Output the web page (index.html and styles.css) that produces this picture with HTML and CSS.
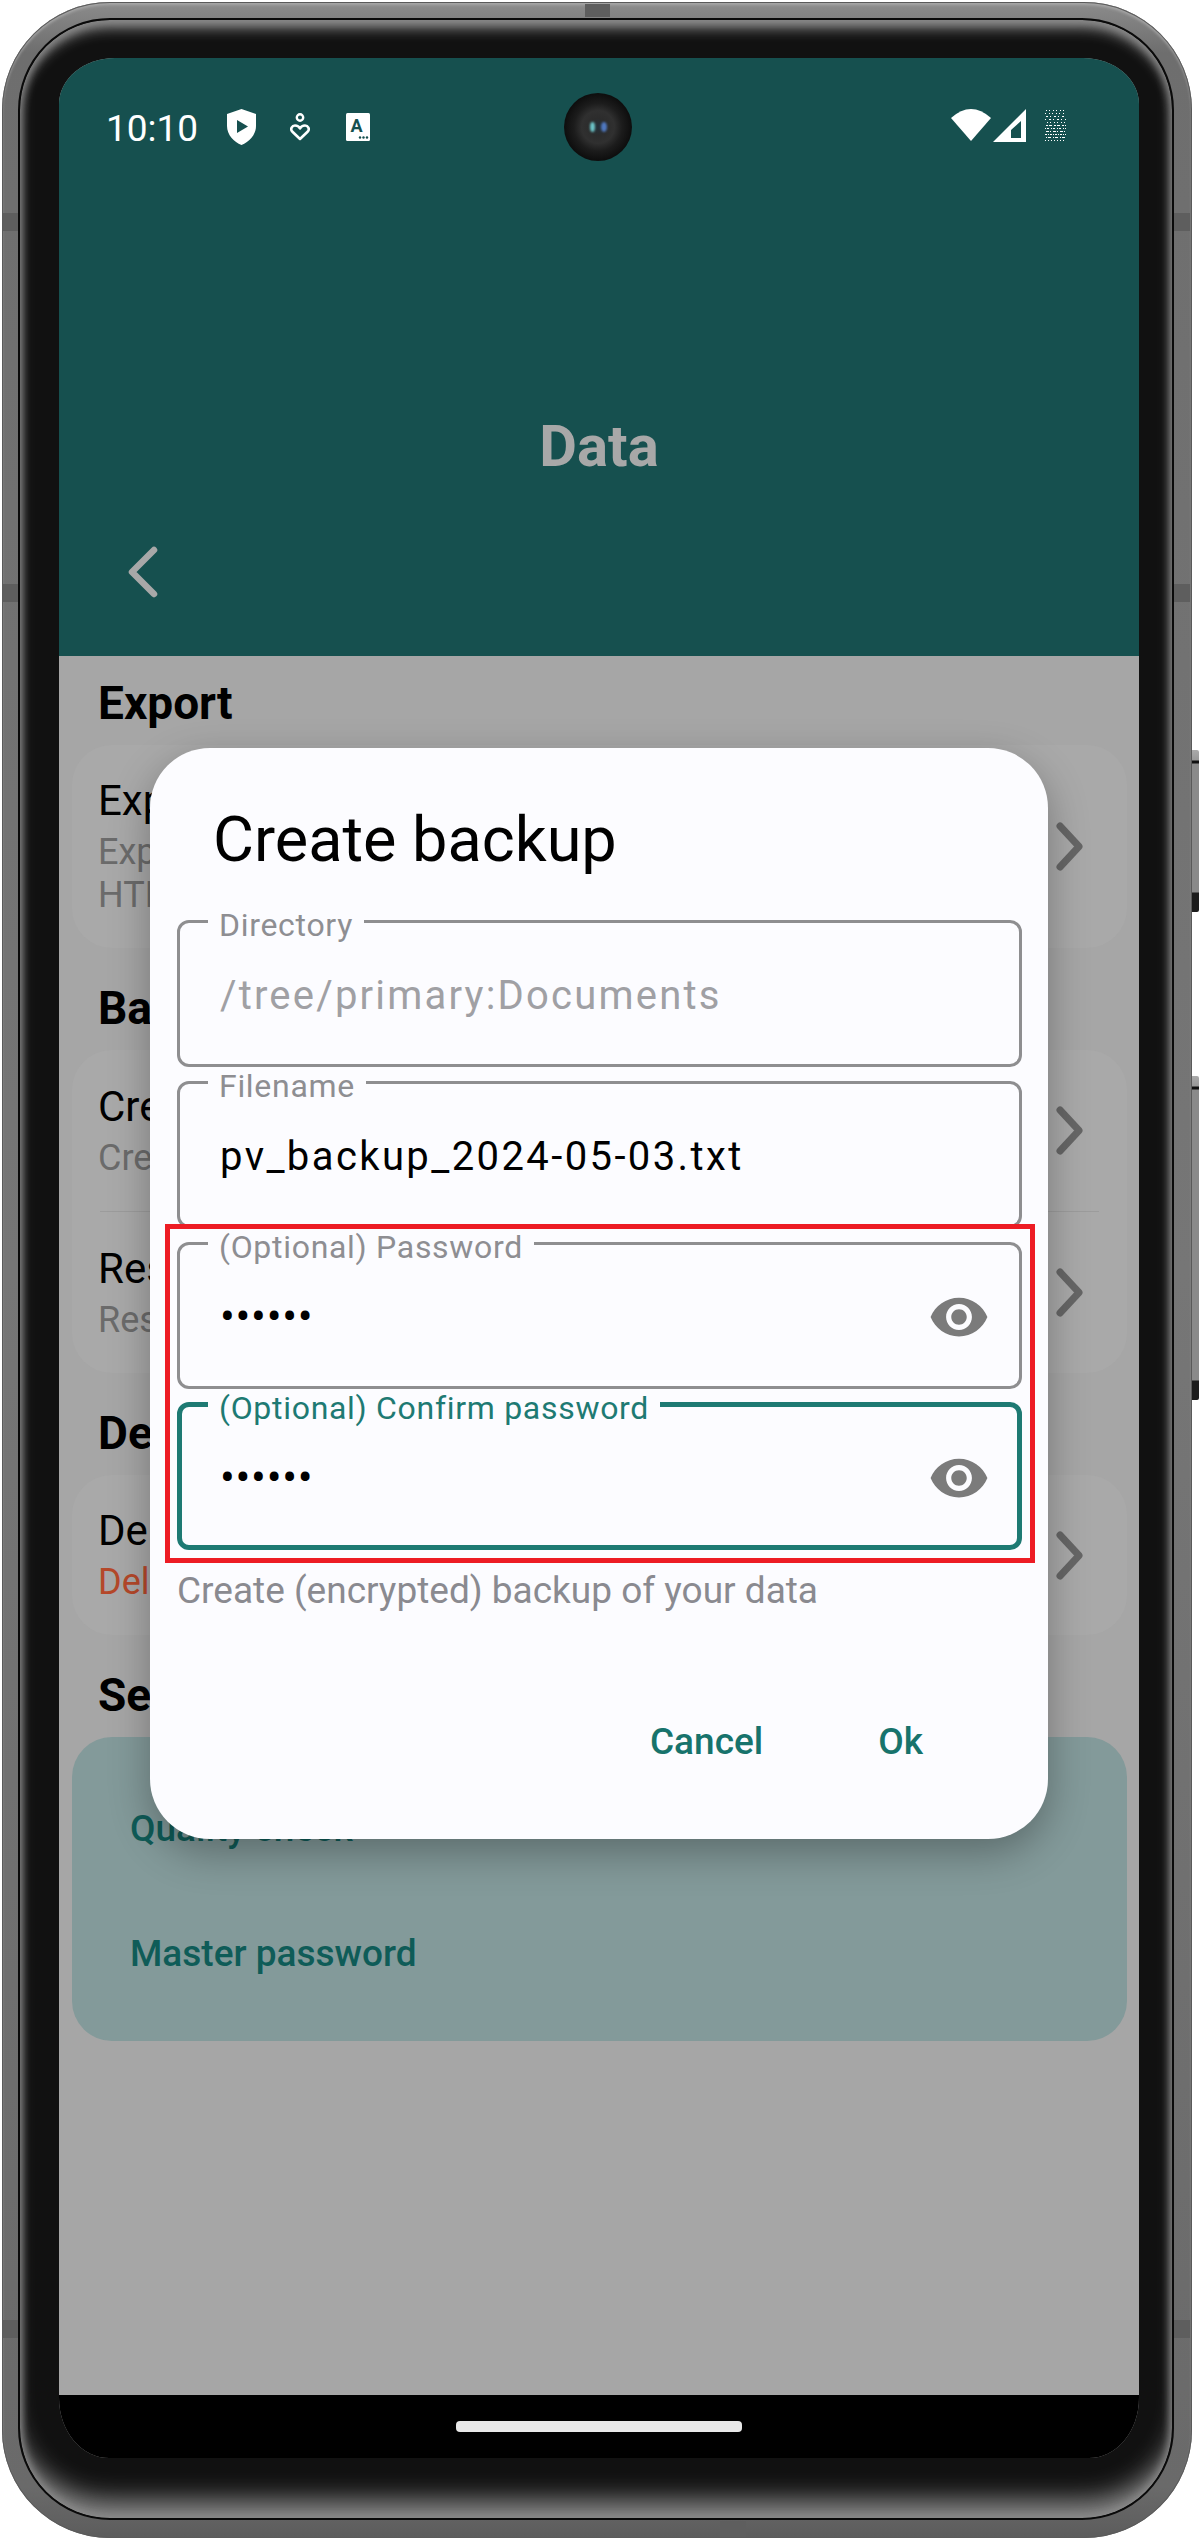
FILE: index.html
```html
<!DOCTYPE html>
<html lang="en">
<head>
  <meta charset="UTF-8">
  <title>Create backup</title>
  <link rel="stylesheet" href="styles.css">
</head>
<body>
  <div class="phone">
    <span class="side-btn side-btn-top"></span>
    <span class="side-btn side-btn-bottom"></span>
    <span class="band band-top"></span>
    <span class="band band-bottom"></span>
    <span class="band band-left band-a"></span>
    <span class="band band-left band-b"></span>
    <span class="band band-left band-c"></span>
    <span class="band band-right band-a"></span>
    <span class="band band-right band-b"></span>
    <span class="band band-right band-c"></span>

    <div class="bezel">
      <div class="screen">
        <div class="camera"><span class="lens lens-a"></span><span class="lens lens-b"></span></div>

        <header class="appbar">
          <div class="statusbar">
            <span class="time">10:10</span>
            <svg class="ic-shield" width="29" height="36" viewBox="0 0 29 36"><path fill="#fff" fill-rule="evenodd" d="M14.5 0 L29 5 V17 C29 26 22 33 14.5 36 C7 33 0 26 0 17 V5 Z M10 11 V24 L21 17.5 Z"/></svg>
            <svg class="ic-heart" width="20" height="28" viewBox="0 0 20 28"><circle cx="10" cy="4.5" r="3.2" fill="none" stroke="#fff" stroke-width="2.4"/><path fill="none" stroke="#fff" stroke-width="2.6" stroke-linejoin="round" d="M10 26 L2.2 18.5 C0 16 2 12.5 5 12.5 C7 12.5 9 13.5 10 15.5 C11 13.5 13 12.5 15 12.5 C18 12.5 20 16 17.8 18.5 Z"/></svg>
            <svg class="ic-lang" width="24" height="28" viewBox="0 0 24 28"><rect width="24" height="28" rx="1.5" fill="#fff"/><text x="10.5" y="19" text-anchor="middle" class="ic-lang-text">A</text><circle cx="14" cy="24.5" r="1.2" fill="#16504f"/><circle cx="17.5" cy="24.5" r="1.2" fill="#16504f"/><circle cx="21" cy="24.5" r="1.2" fill="#16504f"/></svg>
            <span class="status-gap"></span>
            <svg class="ic-wifi" width="40" height="32" viewBox="0 0 40 32"><path fill="#fff" d="M20 32 L0 9 Q20 -9 40 9 Z"/></svg>
            <svg class="ic-signal" width="33" height="33" viewBox="0 0 33 33"><path fill="#fff" fill-rule="evenodd" d="M33 0 V33 H0 Z M28 12 L18 21 V29 H28 Z"/></svg>
            <svg class="ic-noise" width="21" height="34" viewBox="0 0 21 34">
              <g stroke="#fff" stroke-width="1" fill="none">
                <path stroke-dasharray="1 2 1 3" d="M1 1.5H21"/>
                <path stroke-dasharray="1 3 1 2" d="M0 4.5H21"/>
                <path stroke-dasharray="2 2 1 3" d="M1 7.5H21"/>
                <path stroke-dasharray="1 3 2 2" d="M0 10.5H21"/>
                <path stroke-dasharray="1 2 1 3" d="M2 13.5H21"/>
                <path stroke-dasharray="2 1 3 2" d="M1 16.5H21"/>
                <path stroke-dasharray="1 1 2 2" d="M0 19.5H21"/>
                <path stroke-dasharray="3 1 1 2" d="M1 22.5H21"/>
                <path stroke-dasharray="2 1 1 1" d="M0 25.5H21"/>
                <path stroke-dasharray="1 1 3 2" d="M1 28.5H21"/>
                <path stroke-dasharray="1 2" d="M0 31.5H21"/>
              </g>
            </svg>
          </div>
          <h1 class="title">Data</h1>
          <svg class="back" width="30" height="52" viewBox="0 0 30 52"><path d="M26 4 L4 26 L26 48" fill="none" stroke="#a8a8a8" stroke-width="6.5" stroke-linecap="round" stroke-linejoin="round"/></svg>
        </header>

        <main class="content">
          <h2 class="section-title">Export</h2>
          <div class="card card-export">
            <div class="row">
              <div class="row-text">
                <div class="row-title">Export data</div>
                <div class="row-sub">Export your passwords to a<br>HTML file</div>
              </div>
              <svg class="chevron" width="27" height="49" viewBox="0 0 27 49"><path d="M4 4 L23 24.5 L4 45"/></svg>
            </div>
          </div>

          <h2 class="section-title">Backup</h2>
          <div class="card card-backup">
            <div class="row row-half">
              <div class="row-text">
                <div class="row-title">Create backup</div>
                <div class="row-sub">Create backup of your data</div>
              </div>
              <svg class="chevron" width="27" height="49" viewBox="0 0 27 49"><path d="M4 4 L23 24.5 L4 45"/></svg>
            </div>
            <div class="divider"></div>
            <div class="row row-half">
              <div class="row-text">
                <div class="row-title">Restore backup</div>
                <div class="row-sub">Restore backup of your data</div>
              </div>
              <svg class="chevron" width="27" height="49" viewBox="0 0 27 49"><path d="M4 4 L23 24.5 L4 45"/></svg>
            </div>
          </div>

          <h2 class="section-title">Delete</h2>
          <div class="card card-delete">
            <div class="row">
              <div class="row-text">
                <div class="row-title">Delete data</div>
                <div class="row-sub row-sub-danger">Delete all your data</div>
              </div>
              <svg class="chevron" width="27" height="49" viewBox="0 0 27 49"><path d="M4 4 L23 24.5 L4 45"/></svg>
            </div>
          </div>

          <h2 class="section-title">Security</h2>
          <div class="card card-security">
            <div class="link-row">Quality check</div>
            <div class="link-row">Master password</div>
          </div>
        </main>

        <div class="navbar"><span class="nav-pill"></span></div>

        <div class="dialog">
          <h3 class="dialog-title">Create backup</h3>
          <div class="fields">
            <fieldset class="field">
              <legend>Directory</legend>
              <div class="field-row"><span class="value value-muted">/tree/primary:Documents</span></div>
            </fieldset>
            <fieldset class="field">
              <legend>Filename</legend>
              <div class="field-row"><span class="value">pv_backup_2024-05-03.txt</span></div>
            </fieldset>
            <fieldset class="field">
              <legend>(Optional) Password</legend>
              <div class="field-row">
                <span class="value value-secret">••••••</span>
                <svg class="eye" width="62" height="62" viewBox="0 0 24 24"><path d="M12 4.5C7 4.5 2.73 7.61 1 12c1.73 4.39 6 7.5 11 7.5s9.27-3.11 11-7.5c-1.73-4.39-6-7.5-11-7.5zM12 17c-2.76 0-5-2.24-5-5s2.24-5 5-5 5 2.24 5 5-2.24 5-5 5zm0-8c-1.66 0-3 1.34-3 3s1.34 3 3 3 3-1.34 3-3-1.34-3-3-3z"/></svg>
              </div>
            </fieldset>
            <fieldset class="field field-active">
              <legend>(Optional) Confirm password</legend>
              <div class="field-row">
                <span class="value value-secret">••••••</span>
                <svg class="eye" width="62" height="62" viewBox="0 0 24 24"><path d="M12 4.5C7 4.5 2.73 7.61 1 12c1.73 4.39 6 7.5 11 7.5s9.27-3.11 11-7.5c-1.73-4.39-6-7.5-11-7.5zM12 17c-2.76 0-5-2.24-5-5s2.24-5 5-5 5 2.24 5 5-2.24 5-5 5zm0-8c-1.66 0-3 1.34-3 3s1.34 3 3 3 3-1.34 3-3-1.34-3-3-3z"/></svg>
              </div>
            </fieldset>
          </div>
          <p class="hint">Create (encrypted) backup of your data</p>
          <div class="actions">
            <button class="action action-cancel">Cancel</button>
            <button class="action">Ok</button>
          </div>
          <div class="highlight"></div>
        </div>
      </div>
    </div>
  </div>
</body>
</html>
```

FILE: styles.css
```css
* {
  box-sizing: border-box;
}
html, body {
  margin: 0;
  padding: 0;
  background: #fff;
}
body {
  width: 1200px;
  height: 2541px;
  overflow: hidden;
  font-family: Roboto, "Noto Sans", sans-serif;
  color: #000;
}

/* device frame */
.phone {
  position: relative;
  width: 1190px;
  height: 2536px;
  margin: 2px 0 0 2px;
  padding: 16px 18px 18px 16px;
  border-radius: 108px;
  background: linear-gradient(#8c8c8c, #6e6e6e 2%, #767676 50%, #6a6a6a 98%, #5c5c5c);
  box-shadow: inset 0 0 0 1px #5a5a5a, inset 0 3px 3px #a8a8a8;
}
.side-btn {
  position: absolute;
  left: 1190px;
  width: 7px;
  background: linear-gradient(#aaa 0, #999 10px, #111 11px, #111 13px, #8a8a8a 14px, #8a8a8a calc(100% - 20px), #1c1c1c calc(100% - 19px));
  border-radius: 0 2px 2px 0;
}
.side-btn-top {
  top: 748px;
  height: 162px;
}
.side-btn-bottom {
  top: 1074px;
  height: 324px;
}
.band {
  position: absolute;
  background: #5e5e5e;
}
.band-top {
  top: 2px;
  left: 583px;
  width: 25px;
  height: 13px;
}
.band-bottom {
  top: 2519px;
  left: 718px;
  width: 26px;
  height: 16px;
}
.band-left {
  left: 1px;
  width: 16px;
  height: 18px;
}
.band-right {
  left: 1172px;
  width: 16px;
  height: 18px;
}
.band-a {
  top: 211px;
}
.band-b {
  top: 582px;
}
.band-c {
  top: 2318px;
}
.bezel {
  position: relative;
  height: 100%;
  padding: 38px 33px 60px 39px;
  border: 2px solid #0a0a0a;
  border-radius: 92px;
  background: #111;
  box-shadow: inset 0 0 9px 2px #8a8a8a, inset 0 14px 14px -6px #8a8a8a, inset 0 -30px 26px -12px #8a8a8a;
}
.screen {
  position: relative;
  display: flex;
  flex-direction: column;
  height: 2400px;
  overflow: hidden;
  border-radius: 56px 56px 50px 50px / 46px 46px 60px 60px;
  background: #a6a6a6;
}

/* top bar */
.camera {
  position: absolute;
  top: 35px;
  left: 505px;
  width: 68px;
  height: 68px;
  border-radius: 50%;
  background: radial-gradient(circle, #23303a 0, #2c2c2c 18%, #303030 34%, #1c1c1c 50%, #0c0c0c 72%, #000 100%);
}
.lens {
  position: absolute;
  top: 29px;
  width: 5px;
  height: 10px;
  border-radius: 50%;
  filter: blur(1px);
}
.lens-a {
  left: 26px;
  background: #6cc4c8;
}
.lens-b {
  left: 37px;
  width: 6px;
  background: #4f78c0;
}
.appbar {
  height: 598px;
  flex: none;
  background: #16504f;
}
.statusbar {
  display: flex;
  align-items: center;
  height: 138px;
  padding: 0 73px 0 47px;
}
.time {
  width: 92px;
  margin-top: 2px;
  color: #fff;
  font-size: 37px;
  white-space: nowrap;
}
.ic-shield {
  margin-left: 29px;
}
.ic-heart {
  margin-left: 34px;
}
.ic-lang {
  margin-left: 36px;
}
.ic-lang-text {
  fill: #16504f;
  font-family: Roboto, sans-serif;
  font-size: 18px;
  font-weight: 700;
}
.status-gap {
  flex: 1;
}
.ic-wifi {
  margin-top: -4px;
}
.ic-signal {
  margin-left: 2px;
  margin-top: -3px;
}
.ic-noise {
  margin-left: 19px;
  margin-top: -2px;
}
.title {
  margin: 215px 0 0;
  color: #a8a8a8;
  font-size: 58px;
  font-weight: 700;
  line-height: 70px;
  text-align: center;
}
.back {
  display: block;
  margin: 65px 0 0 69px;
}

/* list behind the dialog */
.content {
  flex: 1;
  padding: 21px 12px 0 13px;
}
.section-title {
  margin: 34px 0 16px;
  padding-left: 26px;
  font-size: 46px;
  font-weight: 700;
  line-height: 52px;
}
.section-title:first-child {
  margin-top: 0;
}
.card {
  border-radius: 40px;
  background: #a9a9a9;
}
.card-export {
  display: flex;
  height: 203px;
}
.card-backup {
  height: 323px;
}
.card-delete {
  display: flex;
  height: 160px;
}
.card-security {
  height: 304px;
  padding: 29px 0 0 58px;
  background: #839a9a;
}
.row {
  display: flex;
  flex: 1;
  align-items: center;
  justify-content: space-between;
  padding: 0 44px 0 26px;
}
.row-half {
  height: 161px;
}
.row-title {
  font-size: 42px;
  line-height: 50px;
}
.row-sub {
  margin-top: 5px;
  color: #6b6b6b;
  font-size: 36px;
  line-height: 43px;
}
.row-sub-danger {
  color: #b5482a;
}
.divider {
  height: 1px;
  margin: 0 28px;
  background: #9c9c9c;
}
.chevron path {
  fill: none;
  stroke: #666;
  stroke-width: 7;
  stroke-linecap: round;
  stroke-linejoin: round;
}
.link-row {
  height: 125px;
  color: #0f5c58;
  font-size: 37px;
  font-weight: 500;
  line-height: 125px;
}
.navbar {
  display: flex;
  flex: none;
  justify-content: center;
  height: 63px;
  padding-top: 26px;
  background: #000;
}
.nav-pill {
  width: 286px;
  height: 11px;
  border-radius: 4px;
  background: #e8e8e8;
}

/* dialog */
.dialog {
  position: absolute;
  top: 690px;
  left: 91px;
  width: 898px;
  height: 1091px;
  padding: 0 26px 0 27px;
  border-radius: 60px;
  background: #fcfcff;
  box-shadow: 0 14px 40px rgba(0, 0, 0, 0.3);
}
.dialog-title {
  margin: 0;
  padding: 54px 0 0 36px;
  font-size: 63px;
  font-weight: 400;
  line-height: 76px;
}
.fields {
  display: flex;
  flex-direction: column;
  gap: 3px;
  margin-top: 31px;
}
.field {
  height: 158px;
  margin: 0;
  padding: 0 29px 0 40px;
  border: 3px solid #8e8e90;
  border-radius: 12px;
}
.field legend {
  margin-left: -12px;
  padding: 8px 11px 0;
  color: #8e8e92;
  font-size: 32px;
  letter-spacing: 0.7px;
  line-height: 16px;
}
.field-active {
  padding: 0 27px 0 38px;
  border: 5px solid #1e7a73;
}
.field-active legend {
  color: #1e7a73;
}
.field-row {
  display: flex;
  align-items: center;
  justify-content: space-between;
  height: 124px;
}
.value {
  font-size: 40px;
  letter-spacing: 2.4px;
}
.value-muted {
  color: #a0a0a4;
  letter-spacing: 2.2px;
}
.value-secret {
  font-size: 44px;
  letter-spacing: 0.7px;
}
.eye {
  fill: #7b7b7b;
}
.hint {
  margin: 19px 0 0;
  color: #8a8a90;
  font-size: 37px;
  line-height: 44px;
}
.actions {
  display: flex;
  justify-content: flex-end;
  margin-top: 107px;
  padding-right: 99px;
}
.action {
  padding: 0;
  border: none;
  background: none;
  color: #17736c;
  font-family: inherit;
  font-size: 37px;
  font-weight: 500;
  line-height: 44px;
}
.action-cancel {
  margin-right: 115px;
}
.highlight {
  position: absolute;
  top: 476px;
  left: 15px;
  width: 870px;
  height: 339px;
  border: 5px solid #ed1c24;
}
```
